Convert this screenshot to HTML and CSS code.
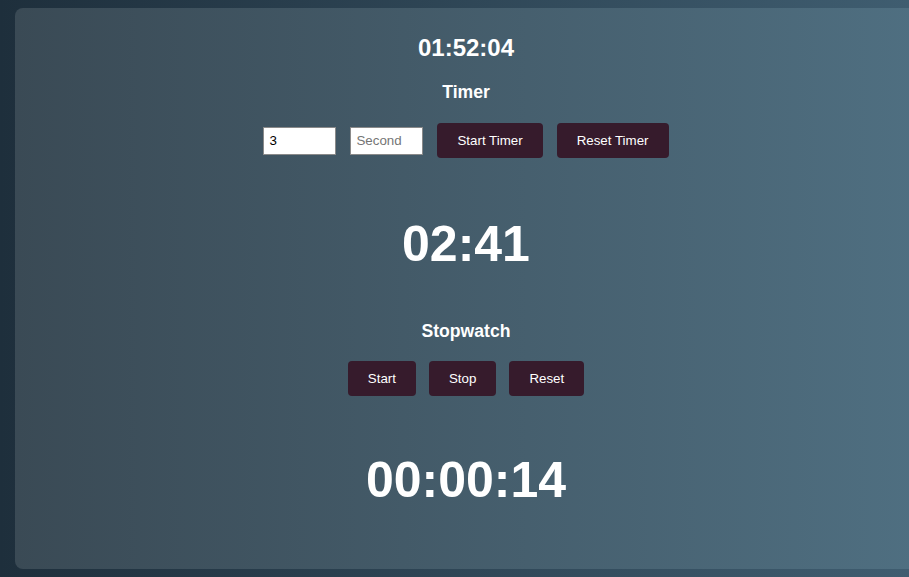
FILE: index.html
```html
<!DOCTYPE html>
<html lang="en">
<head>
<meta charset="utf-8">
<title>Clock, Timer and Stopwatch</title>
<link rel="stylesheet" href="styles.css">
</head>
<body>
<div class="container">
  <h2 class="clock">01:52:04</h2>
  <h3 class="title title-timer">Timer</h3>
  <div class="controls controls-timer">
    <input class="field" type="text" value="3">
    <input class="field" type="text" placeholder="Second">
    <button class="btn">Start Timer</button>
    <button class="btn">Reset Timer</button>
  </div>
  <div class="big big-timer">02:41</div>
  <h3 class="title title-stopwatch">Stopwatch</h3>
  <div class="controls controls-stopwatch">
    <button class="btn">Start</button>
    <button class="btn">Stop</button>
    <button class="btn">Reset</button>
  </div>
  <div class="big big-stopwatch">00:00:14</div>
</div>
</body>
</html>
```
FILE: styles.css
```css
html, body {
  margin: 0;
  padding: 0;
  height: 100%;
  overflow: hidden;
}
body {
  background: linear-gradient(to right, #1e2f3c, #3f5d70);
  font-family: "Liberation Sans", Arial, sans-serif;
}
.container {
  box-sizing: border-box;
  margin: 8px 0 0 15px;
  width: 902px;
  height: 561px;
  border-radius: 8px;
  background: linear-gradient(to right, #3a4a55, #4f6f81);
  color: #fff;
  text-align: center;
  padding-top: 26px;
}
.clock {
  margin: 0;
  font-size: 24px;
  line-height: 28px;
  font-weight: bold;
}
.title {
  margin: 0;
  font-size: 17.6px;
  line-height: 20px;
  font-weight: bold;
}
.title-timer { margin-top: 20px; }
.title-stopwatch { margin-top: 48px; }
.controls {
  display: flex;
  justify-content: center;
  align-items: center;
  gap: 14px;
}
.controls-timer { margin-top: 21px; }
.controls-stopwatch { margin-top: 20px; gap: 13px; }
.field {
  box-sizing: border-box;
  width: 73px;
  height: 28px;
  margin: 0;
  padding: 2px 5px;
  border: 1px solid #8a8a8a;
  background: #fff;
  color: #000;
  font-family: "Liberation Sans", Arial, sans-serif;
  font-size: 13.33px;
}
.field::placeholder { color: #757575; }
.btn {
  box-sizing: border-box;
  height: 35px;
  padding: 0 20px;
  margin: 0;
  border: none;
  border-radius: 4px;
  background: #361b2c;
  color: #fff;
  font-family: "Liberation Sans", Arial, sans-serif;
  font-size: 13.33px;
}
.big {
  font-size: 50px;
  line-height: 58px;
  font-weight: bold;
}
.big-timer { margin-top: 57px; }
.big-stopwatch { margin-top: 55px; }
```
